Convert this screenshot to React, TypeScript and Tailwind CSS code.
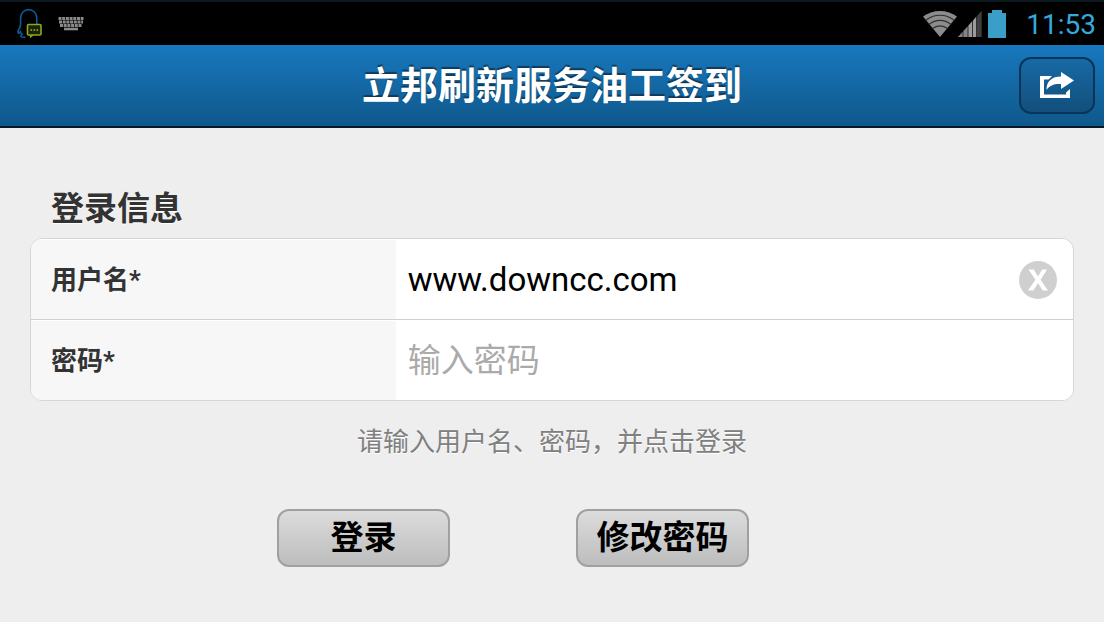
import { useRef, useState } from "react";

function ChatNotificationIcon() {
  return (
    <svg viewBox="0 0 28 32" className="h-8 w-7" fill="none" aria-hidden="true">
      <path
        d="M9.5 29c-2.500.6-4.500.2-4.500-1 0-.8.500-1.200 1-1.600-.8-.8-1.300-1.700-1.600-2.800-.9 1.400-1.900 2-2.300 1.200-.4-1.100.3-3.500 2-5.300-.3-1 0-1.700.5-2.500V10.500C4.600 5.200 8 1.600 12.600 1.600S20.800 5.200 20.800 10.500V16"
        stroke="#0d5897"
        strokeWidth="1.600"
      />
      <rect x="11.500" y="16.500" width="13.500" height="10.500" rx="1" fill="#1b2408" stroke="#8fa61f" strokeWidth="1.600" />
      <path d="M14.500 27v2l2.500-2" stroke="#8fa61f" strokeWidth="1.200" />
      <path d="M14.500 22h1.600M17.500 22h1.600M20.500 22h1.600" stroke="#9fb52b" strokeWidth="1.600" />
    </svg>
  );
}

function KeyboardIcon() {
  return (
    <svg viewBox="0 0 26 15" className="h-[15px] w-[26px]" fill="none" stroke="#8a8a8a" aria-hidden="true">
      <path d="M0.500 2.500H25.500" strokeWidth="3" strokeDasharray="3 .7" />
      <path d="M1 6H25" strokeWidth="2.800" strokeDasharray="3 .7" />
      <path d="M2 9.500H24" strokeWidth="2.800" strokeDasharray="3 .7" />
      <path d="M6 13H20" strokeWidth="2.600" />
    </svg>
  );
}

function WifiIcon() {
  return (
    <svg viewBox="0 0 36 28" className="h-7 w-9" aria-hidden="true">
      <path d="M18 27 1 6.500C10.500-1 25.500-1 35 6.500Z" fill="#8c8c8c" />
      <g fill="none" stroke="#303030" strokeWidth="1.200">
        <path d="M3.500 10.500C12 3.500 24 3.500 32.500 10.500" />
        <path d="M7 14.500C13.500 9 22.500 9 29 14.500" />
        <path d="M10.500 18.500C15 15 21 15 25.500 18.500" />
      </g>
    </svg>
  );
}

function SignalIcon() {
  return (
    <svg viewBox="0 0 24 28" className="h-7 w-6" aria-hidden="true">
      <path d="M0 27 23.500 1V27Z" fill="#303030" />
      <path d="M0 27 4.500 22V27Z" fill="#858585" />
      <path d="M5.500 27V21L9.500 16.500V27Z" fill="#858585" />
      <path d="M10.500 27V15.500L14 11.500V27Z" fill="#9a9a9a" />
      <path d="M15 27V10.500L18 7V27Z" fill="#9a9a9a" />
      <path d="M19 27V6L23.500 1V27Z" fill="#3f3f3f" />
    </svg>
  );
}

function BatteryIcon() {
  return (
    <svg viewBox="0 0 18 28" className="h-7 w-[18px]" aria-hidden="true">
      <path d="M0 3H4V0H14V3H18V28H0Z" fill="#3a9fc8" />
    </svg>
  );
}

function ShareIcon() {
  return (
    <svg viewBox="0 0 36 28" className="h-7 w-9" aria-hidden="true">
      <path d="M13 4H1V26H31V17L27 20.500V22.500H5V7.500H9.500Z" fill="#fff" />
      <path d="M22 0 35 8.500 22 17V12C15.500 11.500 11 13 7.500 18 7.500 9 13 4.500 22 4.500Z" fill="#fff" />
    </svg>
  );
}

function ClearIcon() {
  return (
    <svg viewBox="0 0 38 38" className="size-[38px]" aria-hidden="true">
      <circle cx="19" cy="19" r="19" fill="#cfcfcf" />
      <path
        d="M9.500 8.500H14.800L19 15.500 23.200 8.500H28L21.600 18.700 29 29.500H23.700L19 22.200 14.300 29.500H9L16.400 18.700Z"
        fill="#fff"
      />
    </svg>
  );
}

const rowClass = "flex h-20 items-stretch border-t border-white";
const labelClass = "flex w-[35%] items-center bg-[#f7f7f7] pt-0.5 pl-5 text-[26px] font-bold text-[#333333]";
const inputClass =
  "min-w-0 flex-1 bg-white pl-3 text-[33px] text-black outline-none placeholder:text-[#aaaaaa]";
const buttonClass =
  "flex h-[58px] w-[173px] items-center justify-center rounded-xl border-2 border-[#a0a0a0] bg-linear-to-b from-[#dcdcdc] to-[#bdbdbd] text-[33px] font-bold whitespace-nowrap text-black";

export default function App() {
  const [user, setUser] = useState("www.downcc.com");
  const [password, setPassword] = useState("");
  const userInput = useRef<HTMLInputElement>(null);

  return (
    <div
      lang="zh-CN"
      className="flex min-h-screen flex-col bg-[#eeeeee] font-['Roboto','Noto_Sans_CJK_SC',sans-serif]"
    >
      <div className="flex h-[45px] items-center justify-between border-t-2 border-[#0b1a1e] bg-black pr-2 pl-4">
        <div className="flex items-center gap-3.5">
          <ChatNotificationIcon />
          <KeyboardIcon />
        </div>
        <div className="flex items-center">
          <WifiIcon />
          <SignalIcon />
          <div className="mr-5 ml-1.5 flex">
            <BatteryIcon />
          </div>
          <time className="pt-0.5 text-[28px] leading-8 text-[#33a9dc]">11:53</time>
        </div>
      </div>

      <header className="grid h-[83px] grid-cols-[1fr_auto_1fr] items-center border-b-2 border-[#06192a] bg-linear-to-b from-[#1878be] to-[#0f588b] px-[9px]">
        <h1 className="col-start-2 text-[38px] leading-[56px] font-bold text-white [text-shadow:0_-2px_1px_#123a58]">
          立邦刷新服务油工签到
        </h1>
        <button
          type="button"
          aria-label="分享"
          className="flex h-[57px] w-[76px] items-center justify-center justify-self-end rounded-xl border-2 border-[#0a3558] bg-linear-to-b from-[#1769a5] to-[#124f7c]"
        >
          <ShareIcon />
        </button>
      </header>

      <form className="flex flex-col px-[30px] pt-[61px]" onSubmit={(e) => e.preventDefault()}>
        <h2 className="pl-[21px] text-[33px] leading-[40px] font-bold text-[#333333] [text-shadow:0_1px_0_#ffffff]">
          登录信息
        </h2>

        <div className="mt-[9px] overflow-hidden rounded-xl border border-[#d6d6d6] bg-white">
          <div className={rowClass}>
            <label htmlFor="user" className={labelClass}>
              用户名*
            </label>
            <div className="flex min-w-0 flex-1 items-center">
              <input
                id="user"
                ref={userInput}
                type="text"
                value={user}
                onChange={(e) => setUser(e.target.value)}
                className={inputClass}
              />
              <button
                type="button"
                aria-label="清除"
                className="mr-4 rounded-full"
                onClick={() => {
                  setUser("");
                  userInput.current?.focus();
                }}
              >
                <ClearIcon />
              </button>
            </div>
          </div>
          <div className="border-t border-[#d0d0d0]">
            <div className={rowClass}>
              <label htmlFor="password" className={labelClass}>
                密码*
              </label>
              <input
                id="password"
                type="password"
                placeholder="输入密码"
                value={password}
                onChange={(e) => setPassword(e.target.value)}
                className={inputClass}
              />
            </div>
          </div>
        </div>

        <p className="mt-5 text-center text-[26px] leading-[42px] text-[#808080] [text-shadow:0_1px_0_#ffffff]">
          请输入用户名、密码，并点击登录
        </p>

        <div className="mt-[46px] flex gap-[126px] pl-[247px]">
          <button type="submit" className={buttonClass}>
            登录
          </button>
          <button type="button" className={buttonClass}>
            修改密码
          </button>
        </div>
      </form>
    </div>
  );
}
